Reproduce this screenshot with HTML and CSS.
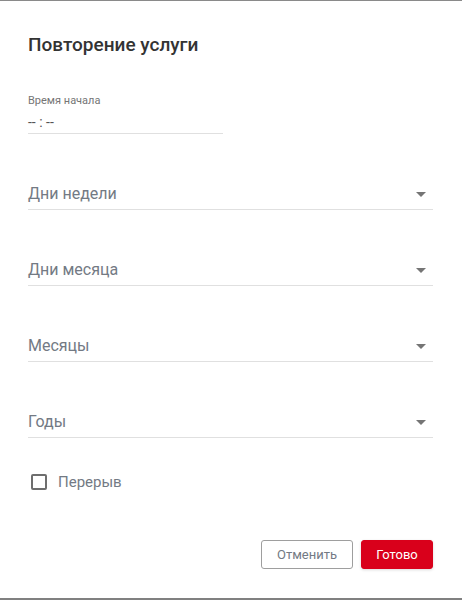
FILE: index.html
```html
<!DOCTYPE html>
<html lang="ru">
<head>
<meta charset="utf-8">
<link rel="stylesheet" href="styles.css">
</head>
<body>
<div class="dialog">
  <h2 class="title">Повторение услуги</h2>
  <div class="time-field">
    <div class="time-label">Время начала</div>
    <div class="time-value">-- : --</div>
  </div>
  <div class="select"><span>Дни недели</span><i class="arrow"></i></div>
  <div class="select"><span>Дни месяца</span><i class="arrow"></i></div>
  <div class="select"><span>Месяцы</span><i class="arrow"></i></div>
  <div class="select"><span>Годы</span><i class="arrow"></i></div>
  <label class="check"><span class="box"></span><span>Перерыв</span></label>
  <div class="actions">
    <button class="btn btn-outline">Отменить</button>
    <button class="btn btn-primary">Готово</button>
  </div>
</div>
</body>
</html>
```
FILE: styles.css
```css
* { box-sizing: border-box; }
html, body { margin: 0; padding: 0; background: #fff; }
body { font-family: Roboto, "Noto Sans", sans-serif; }
.dialog {
  width: 462px;
  height: 600px;
  border-top: 1px solid #8a8a8a;
  border-bottom: 2px solid #808080;
  padding: 32px 29px 0 28px;
  display: flex;
  flex-direction: column;
}
.title {
  margin: 0;
  font-size: 19px;
  line-height: 24px;
  font-weight: 500;
  color: #333;
}
.time-field {
  margin-top: 37px;
  width: 195px;
  border-bottom: 1px solid #e0e0e0;
}
.time-label {
  font-size: 11px;
  line-height: 14px;
  color: #757575;
}
.time-value {
  margin-top: 4px;
  padding-bottom: 1px;
  font-size: 14px;
  line-height: 20px;
  color: #555;
  white-space: pre;
}
.select {
  margin-top: 48px;
  display: flex;
  align-items: center;
  justify-content: space-between;
  height: 28px;
  padding-bottom: 3px;
  border-bottom: 1px solid #e0e0e0;
  font-size: 16px;
  line-height: 24px;
  color: #737a84;
}
.time-field + .select { margin-top: 48px; }
.arrow {
  width: 0; height: 0;
  margin-right: 7px;
  border-left: 5px solid transparent;
  border-right: 5px solid transparent;
  border-top: 5px solid #757575;
}
.check {
  margin-top: 34px;
  display: flex;
  align-items: center;
  height: 20px;
  padding-left: 3px;
  font-size: 15px;
  color: #737a84;
}
.box {
  width: 16px; height: 16px;
  border: 2px solid #6e6e6e;
  border-radius: 2px;
  margin-right: 11px;
}
.actions {
  margin-top: 48px;
  display: flex;
  justify-content: flex-end;
  gap: 8px;
}
.btn {
  height: 29px;
  font-family: Roboto, "Noto Sans", sans-serif;
  font-size: 13px;
  border-radius: 3px;
  padding: 0;
  cursor: pointer;
}
.btn-outline {
  width: 92px;
  background: #fff;
  border: 1px solid #9e9e9e;
  color: #737a84;
}
.btn-primary {
  width: 72px;
  background: #d9001b;
  border: 1px solid #d9001b;
  color: #fff;
  box-shadow: 0 1px 3px rgba(0,0,0,0.15);
}
```
